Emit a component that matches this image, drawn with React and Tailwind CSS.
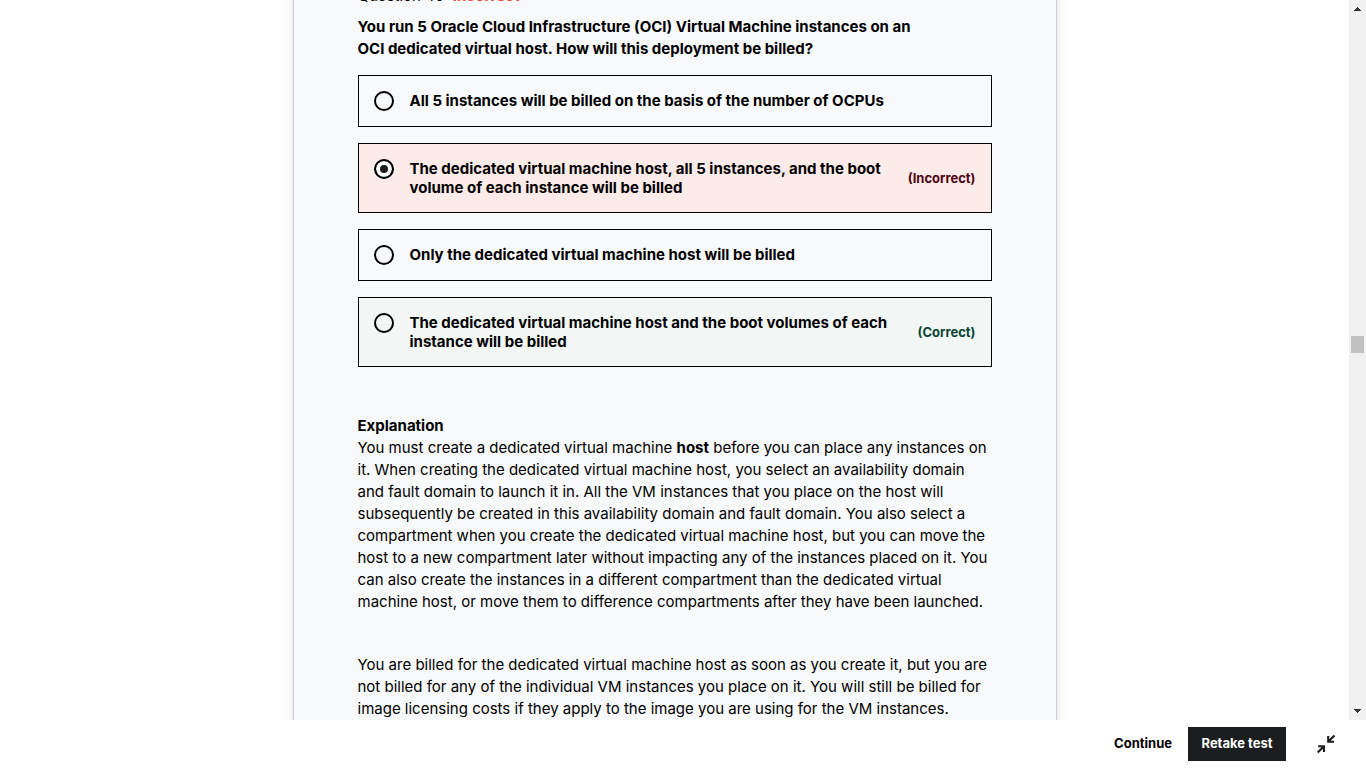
const options = [
  { id: "a", lines: ["All 5 instances will be billed on the basis of the number of OCPUs"] },
  {
    id: "b",
    lines: [
      "The dedicated virtual machine host, all 5 instances, and the boot",
      "volume of each instance will be billed",
    ],
    verdict: "(Incorrect)",
    box: "bg-[#fcebe9]",
    tone: "text-[#4f0410]",
    chosen: true,
  },
  { id: "c", lines: ["Only the dedicated virtual machine host will be billed"] },
  {
    id: "d",
    lines: [
      "The dedicated virtual machine host and the boot volumes of each",
      "instance will be billed",
    ],
    verdict: "(Correct)",
    box: "bg-[#f2f7f6]",
    tone: "text-[#0b4434]",
  },
];

function Lines({ lines }) {
  return lines.map((line) => (
    <span key={line} className="block whitespace-nowrap">
      {line}
    </span>
  ));
}

function Option({ option }) {
  return (
    <div className={`flex items-center border border-black p-[15px] ${option.box ?? ""}`}>
      <label htmlFor={option.id} className="flex flex-1 items-start gap-4">
        <input
          id={option.id}
          type="radio"
          name="answer"
          defaultChecked={option.chosen}
          className="size-5 shrink-0 appearance-none rounded-full border-2 border-black checked:bg-[#1c1d1f] checked:shadow-[inset_0_0_0_4px_#fff]"
        />
        <span className="text-[15px] leading-[19px] font-bold">
          <Lines lines={option.lines} />
        </span>
      </label>
      {option.verdict && (
        <span className={`text-[13px] leading-[19px] font-bold ${option.tone}`}>{option.verdict}</span>
      )}
    </div>
  );
}

function Scrollbar() {
  return (
    <div aria-hidden="true" className="flex w-[17px] shrink-0 flex-col items-center bg-[#f1f1f1]">
      <svg className="size-[17px] shrink-0" viewBox="0 0 17 17" shapeRendering="crispEdges">
        <path d="M8 7h1v1h1v1h1v1h1v1H5v-1h1V9h1V8h1z" fill="#333" />
      </svg>
      <div className="grow-[319]" />
      <div className="h-[17px] w-[13px] shrink-0 bg-[#c1c1c1]" />
      <div className="grow-[350]" />
      <svg className="size-[17px] shrink-0" viewBox="0 0 17 17" shapeRendering="crispEdges">
        <path d="M5 6h7v1h-1v1h-1v1H9v1H8V9H7V8H6V7H5z" fill="#333" />
      </svg>
    </div>
  );
}

export default function App() {
  return (
    <div className="flex h-screen flex-col bg-white font-[Inter,'Liberation_Sans',sans-serif] text-[15px] text-black">
      <div className="flex min-h-0 flex-1">
        <main className="min-w-0 flex-1 overflow-hidden">
          <article className="mx-auto -mt-5 w-full max-w-[764px] border-x border-[#cdd2da] bg-[#f8f9fb] px-16 pb-16 shadow-[0_2px_4px_rgba(0,0,0,0.08),0_4px_12px_rgba(0,0,0,0.08)]">
            <p className="mb-1 text-[15px] leading-[32px]">
              Question 40: <strong className="text-[#eb4a3a]">Incorrect</strong>
            </p>
            <h1 className="text-[15px] leading-[22px] font-bold">
              <Lines
                lines={[
                  "You run 5 Oracle Cloud Infrastructure (OCI) Virtual Machine instances on an",
                  "OCI dedicated virtual host. How will this deployment be billed?",
                ]}
              />
            </h1>
            <form className="mt-[15px] flex flex-col gap-4">
              {options.map((option) => (
                <Option key={option.id} option={option} />
              ))}
            </form>
            <h2 className="mt-12 text-[15px] leading-[22px] font-bold">Explanation</h2>
            <p className="leading-[22px] whitespace-nowrap">
              You must create a dedicated virtual machine <strong>host</strong> before you can place any instances on
              <Lines
                lines={[
                  "it. When creating the dedicated virtual machine host, you select an availability domain",
                  "and fault domain to launch it in. All the VM instances that you place on the host will",
                  "subsequently be created in this availability domain and fault domain. You also select a",
                  "compartment when you create the dedicated virtual machine host, but you can move the",
                  "host to a new compartment later without impacting any of the instances placed on it. You",
                  "can also create the instances in a different compartment than the dedicated virtual",
                  "machine host, or move them to difference compartments after they have been launched.",
                ]}
              />
            </p>
            <p className="mt-[41px] leading-[22px]">
              <Lines
                lines={[
                  "You are billed for the dedicated virtual machine host as soon as you create it, but you are",
                  "not billed for any of the individual VM instances you place on it. You will still be billed for",
                  "image licensing costs if they apply to the image you are using for the VM instances.",
                ]}
              />
            </p>
          </article>
        </main>
        <Scrollbar />
      </div>
      <footer className="flex h-12 shrink-0 items-center justify-end pr-[30px] text-[13px] font-bold">
        <button type="button" className="h-[34px] px-4">
          Continue
        </button>
        <button type="button" className="h-[34px] min-w-[98px] bg-[#1c1d1f] px-3 text-white">
          Retake test
        </button>
        <button type="button" aria-label="Exit expanded view" className="ml-[30px]">
          <svg className="size-5" viewBox="0 0 20 20" fill="none" stroke="#1c1d1f" strokeWidth="2.1">
            <path d="M12.200 2v5.800H18M12.400 7.600l6.100-6.100M2.200 12.200H8V18M7.800 12.400l-6.100 6.100" />
          </svg>
        </button>
      </footer>
    </div>
  );
}
